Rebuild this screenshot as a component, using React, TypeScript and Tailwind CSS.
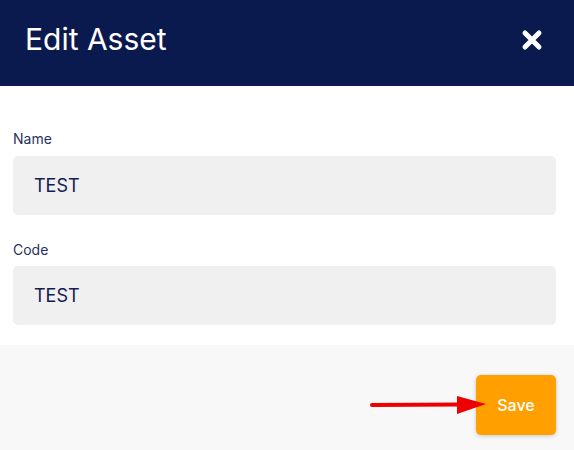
import React from "react";

export default function App() {
  return (
    <div className="w-[574px] h-[450px] bg-white flex flex-col overflow-hidden" style={{ fontFamily: "Inter, 'Noto Sans', sans-serif" }}>
      <div className="h-[86px] bg-[#0a1a4e] flex items-center justify-between pl-[25px] pr-[31px] shrink-0">
        <h1 className="text-white text-[30px] leading-none font-normal pb-[8px]">Edit Asset</h1>
        <svg width="22" height="22" viewBox="0 0 22 22" className="mb-[6px]">
          <path d="M4 4 L18 18 M18 4 L4 18" stroke="white" strokeWidth="5" strokeLinecap="round" />
        </svg>
      </div>
      <div className="flex flex-col pl-[13px] pr-[18px] pt-[45px] pb-[20px] bg-white">
        <label className="text-[14px] text-[#27325c] leading-[16px] mb-[9px]">Name</label>
        <div className="h-[59px] bg-[#f0f0f0] rounded-[5px] flex items-center pl-[21px] text-[18px] text-[#142050]">TEST</div>
        <label className="text-[14px] text-[#27325c] leading-[16px] mt-[27px] mb-[8px]">Code</label>
        <div className="h-[59px] bg-[#f0f0f0] rounded-[5px] flex items-center pl-[21px] text-[18px] text-[#142050]">TEST</div>
      </div>
      <div className="flex-1 bg-[#f8f8f8] flex items-start justify-end pr-[18px] pt-[30px]">
        <div className="relative">
          <svg width="124" height="24" viewBox="0 0 124 24" className="absolute left-[-107px] top-[18px]">
            <path d="M3 12 L90 11.5" stroke="#ee0000" strokeWidth="4" strokeLinecap="round" />
            <path d="M88 3 L117 11 L88 21 Z" fill="#ee0000" />
          </svg>
          <button className="w-[80px] h-[60px] bg-[#ffa000] rounded-[5px] text-white text-[16px] font-medium shadow-[0_1px_4px_rgba(0,0,0,0.2)]">Save</button>
        </div>
      </div>
    </div>
  );
}
